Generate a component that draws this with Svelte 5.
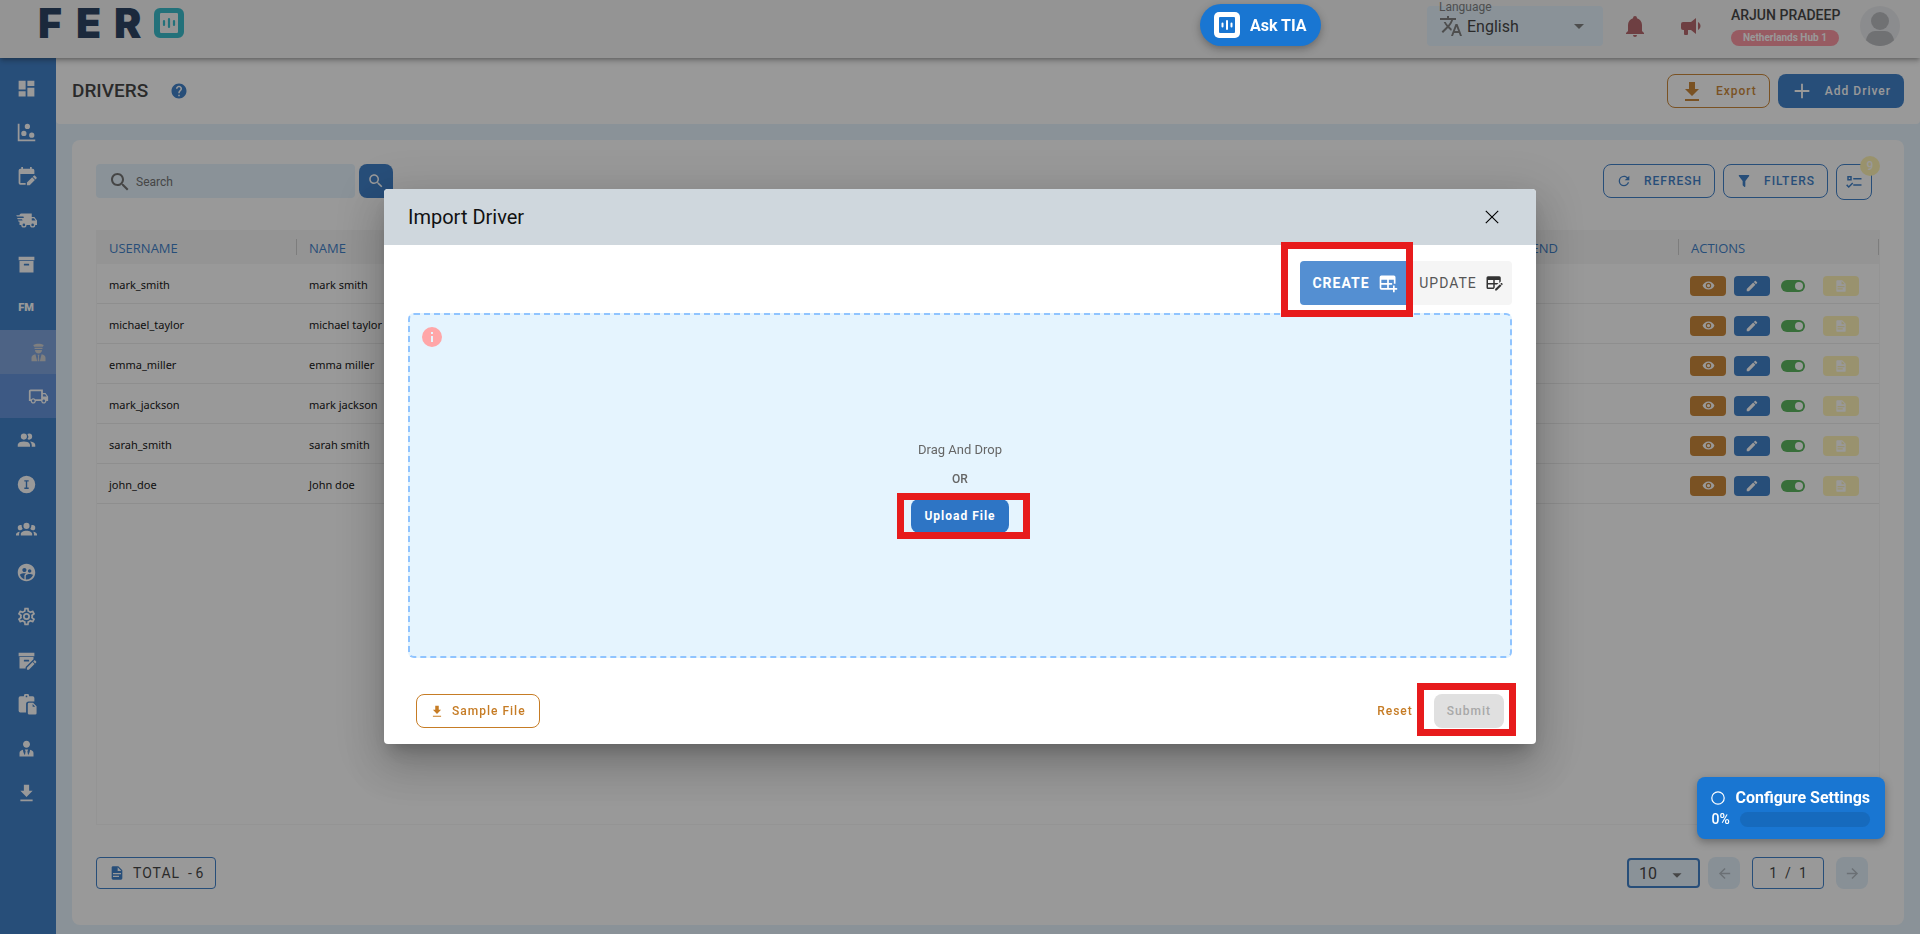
<script>
  const icons = {
    dashboard: 'M13,3V9H21V3M13,21H21V11H13M3,21H11V15H3M3,13H11V3H3V13Z',
    scatter: 'M2,2H4V20H22V22H2V2M9,10A3,3 0 0,1 12,13A3,3 0 0,1 9,16A3,3 0 0,1 6,13A3,3 0 0,1 9,10M13,2A3,3 0 0,1 16,5A3,3 0 0,1 13,8A3,3 0 0,1 10,5A3,3 0 0,1 13,2M18,12A3,3 0 0,1 21,15A3,3 0 0,1 18,18A3,3 0 0,1 15,15A3,3 0 0,1 18,12Z',
    calendarEdit: 'M5,21.5A2,2 0 0,1 3,19.5V5A2,2 0 0,1 5,3H6V1H8V3H16V1H18V3H19A2,2 0 0,1 21,5V9H5V19.5H11V21.5H5M12.5,22V18.9L18.5,12.9L21.6,16L15.6,22H12.5M22.3,15.3L19.2,12.2L20.3,11.1C20.7,10.7 21.3,10.7 21.7,11.1L23.4,12.8C23.8,13.2 23.8,13.8 23.4,14.2L22.3,15.3Z',
    truckFast: 'M3,13.5L2.25,12H7.5L6.9,10.5H2L1.25,9H9.05L8.45,7.5H1.11L0.25,6H4A2,2 0 0,1 6,4H18V8H21L24,12V17H22A3,3 0 0,1 19,20A3,3 0 0,1 16,17H12A3,3 0 0,1 9,20A3,3 0 0,1 6,17H4V13.5H3M19,18.5A1.5,1.5 0 0,0 20.5,17A1.5,1.5 0 0,0 19,15.5A1.5,1.5 0 0,0 17.5,17A1.5,1.5 0 0,0 19,18.5M20.5,9.5H18V12H22.46L20.5,9.5M9,18.5A1.5,1.5 0 0,0 10.5,17A1.5,1.5 0 0,0 9,15.5A1.5,1.5 0 0,0 7.5,17A1.5,1.5 0 0,0 9,18.5Z',
    archive: 'M3,3H21V7H3V3M4,8H20V21H4V8M9.5,11A0.5,0.5 0 0,0 9,11.5V13H15V11.5A0.5,0.5 0 0,0 14.5,11H9.5Z',
    pilot: 'M6,3.5C8,2.3 10,2 12,2C14,2 16,2.3 18,3.5L17,5.5H7L6,3.5M7.5,6.5H16.5V8H7.5V6.5M8,9H16C16,11.5 14.2,13 12,13C9.8,13 8,11.5 8,9M8.5,14L10.5,22H4V18C4,16 5.8,14.7 8.5,14M15.5,14C18.2,14.7 20,16 20,18V22H13.5L15.5,14M11,14.5H13L12.5,16.5L13,22H11L11.5,16.5Z',
    truck: 'M18 18.5C18.83 18.5 19.5 17.83 19.5 17C19.5 16.17 18.83 15.5 18 15.5C17.17 15.5 16.5 16.17 16.5 17C16.5 17.83 17.17 18.5 18 18.5M19.5 9.5H17V12H21.46L19.5 9.5M6 18.5C6.83 18.5 7.5 17.83 7.5 17C7.5 16.17 6.83 15.5 6 15.5C5.17 15.5 4.5 16.17 4.5 17C4.5 17.83 5.17 18.5 6 18.5M20 8L23 12V17H21C21 18.66 19.66 20 18 20C16.34 20 15 18.66 15 17H9C9 18.66 7.66 20 6 20C4.34 20 3 18.66 3 17H1V6C1 4.89 1.89 4 3 4H17V8H20M3 6V15H3.76C4.31 14.39 5.11 14 6 14C6.89 14 7.69 14.39 8.24 15H15V6H3Z',
    people: 'M16 17V19H2V17S2 13 9 13 16 17 16 17M12.5 7.5A3.5 3.5 0 1 0 9 11A3.5 3.5 0 0 0 12.5 7.5M15.94 13A5.32 5.32 0 0 1 18 17V19H22V17S22 13.37 15.94 13M15 4A3.39 3.39 0 0 0 13.07 4.59A5 5 0 0 1 13.07 10.41A3.39 3.39 0 0 0 15 11A3.5 3.5 0 0 0 15 4Z',
    coin: 'M12,2A10,10 0 1,1 12,22A10,10 0 1,1 12,2M9.5,7V8.5H11.2V15.5H9.5V17H14.5V15.5H12.8V8.5H14.5V7H9.5Z',
    group: 'M12,5.5A3.5,3.5 0 0,1 15.5,9A3.5,3.5 0 0,1 12,12.5A3.5,3.5 0 0,1 8.5,9A3.5,3.5 0 0,1 12,5.5M5,8C5.56,8 6.08,8.15 6.53,8.42C6.38,9.85 6.8,11.27 7.66,12.38C7.16,13.34 6.16,14 5,14A3,3 0 0,1 2,11A3,3 0 0,1 5,8M19,8A3,3 0 0,1 22,11A3,3 0 0,1 19,14C17.84,14 16.84,13.34 16.34,12.38C17.2,11.27 17.62,9.85 17.47,8.42C17.92,8.15 18.44,8 19,8M5.5,18.25C5.5,16.18 8.41,14.5 12,14.5C15.59,14.5 18.5,16.18 18.5,18.25V20H5.5V18.25M0,20V18.5C0,17.11 1.89,15.94 4.45,15.6C3.86,16.28 3.5,17.22 3.5,18.25V20H0M24,20H20.5V18.25C20.5,17.22 20.14,16.28 19.55,15.6C22.11,15.94 24,17.11 24,18.5V20Z',
    supervised: 'M11.99 2c-5.52 0-10 4.48-10 10s4.48 10 10 10 10-4.48 10-10-4.48-10-10-10zm3.61 6.34c1.07 0 1.93.86 1.93 1.93 0 1.07-.86 1.93-1.93 1.93-1.07 0-1.93-.86-1.93-1.93-.01-1.07.86-1.93 1.93-1.93zm-6-1.58c1.3 0 2.36 1.06 2.36 2.36 0 1.3-1.06 2.36-2.36 2.36s-2.36-1.06-2.36-2.36c0-1.31 1.05-2.36 2.36-2.36zm0 9.13v3.75c-2.4-.75-4.3-2.6-5.14-4.96 1.05-1.12 3.67-1.69 5.14-1.69.53 0 1.2.08 1.9.22-1.64.87-1.9 2.02-1.9 2.68zM11.99 20c-.27 0-.53-.01-.79-.04v-4.07c0-1.42 2.94-2.13 4.4-2.13 1.07 0 2.92.39 3.84 1.15-1.17 2.97-4.06 5.09-7.45 5.09z',
    cog: 'M12,8A4,4 0 0,1 16,12A4,4 0 0,1 12,16A4,4 0 0,1 8,12A4,4 0 0,1 12,8M12,10A2,2 0 0,0 10,12A2,2 0 0,0 12,14A2,2 0 0,0 14,12A2,2 0 0,0 12,10M10,22C9.75,22 9.54,21.82 9.5,21.58L9.13,18.93C8.5,18.68 7.96,18.34 7.44,17.94L4.95,18.95C4.73,19.03 4.46,18.95 4.34,18.73L2.34,15.27C2.21,15.05 2.27,14.78 2.46,14.63L4.57,12.97L4.5,12L4.57,11L2.46,9.37C2.27,9.22 2.21,8.95 2.34,8.73L4.34,5.27C4.46,5.05 4.73,4.96 4.95,5.05L7.44,6.05C7.96,5.66 8.5,5.32 9.13,5.07L9.5,2.42C9.54,2.18 9.75,2 10,2H14C14.25,2 14.46,2.18 14.5,2.42L14.87,5.07C15.5,5.32 16.04,5.66 16.56,6.05L19.05,5.05C19.27,4.96 19.54,5.05 19.66,5.27L21.66,8.73C21.79,8.95 21.73,9.22 21.54,9.37L19.43,11L19.5,12L19.43,13L21.54,14.63C21.73,14.78 21.79,15.05 21.66,15.27L19.66,18.73C19.54,18.95 19.27,19.04 19.05,18.95L16.56,17.95C16.04,18.34 15.5,18.68 14.87,18.93L14.5,21.58C14.46,21.82 14.25,22 14,22H10M11.25,4L10.88,6.61C9.68,6.86 8.62,7.5 7.85,8.39L5.44,7.35L4.69,8.65L6.8,10.2C6.4,11.37 6.4,12.64 6.8,13.8L4.68,15.36L5.43,16.66L7.86,15.62C8.63,16.5 9.68,17.14 10.87,17.38L11.24,20H12.76L13.13,17.39C14.32,17.14 15.37,16.5 16.14,15.62L18.57,16.66L19.32,15.36L17.2,13.81C17.6,12.64 17.6,11.37 17.2,10.2L19.31,8.65L18.56,7.35L16.15,8.39C15.38,7.5 14.32,6.86 13.12,6.62L12.75,4H11.25Z',
    archiveEdit: 'M3,3H21V7H3V3M4,8H20V10.5L11,19.5V21H4V8M9.5,11A0.5,0.5 0 0,0 9,11.5V13H15V11.5A0.5,0.5 0 0,0 14.5,11H9.5M12.5,22.5V20.3L19,13.8L21.2,16L14.7,22.5H12.5M21.9,15.3L19.7,13.1L20.8,12C21.1,11.7 21.6,11.7 21.9,12L23,13.1C23.3,13.4 23.3,13.9 23,14.2L21.9,15.3Z',
    clipboardFile: 'M5,2.5H9A3,3 0 0,1 15,2.5H19A2,2 0 0,1 21,4.5V8.5H14.5A3,3 0 0,0 11.5,11.5V21H5A2,2 0 0,1 3,19V4.5A2,2 0 0,1 5,2.5M12,1.8A1,1 0 1,0 12,3.8A1,1 0 1,0 12,1.8M15,10H19.5L23.5,14V22A1.5,1.5 0 0,1 22,23.5H15A1.5,1.5 0 0,1 13.5,22V11.5A1.5,1.5 0 0,1 15,10M19,11.5V14.5H22L19,11.5Z',
    tie: 'M12 3C14.21 3 16 4.79 16 7S14.21 11 12 11 8 9.21 8 7 9.79 3 12 3M16 13.54C16 14.6 15.72 17.07 13.81 19.83L13 15L13.94 13.12C13.32 13.05 12.67 13 12 13S10.68 13.05 10.06 13.12L11 15L10.19 19.83C8.28 17.07 8 14.6 8 13.54C5.61 14.24 4 15.5 4 17V21H20V17C20 15.5 18.4 14.24 16 13.54Z',
    download: 'M5,22H19V20H5M19,10H15V3H9V10H5L12,17L19,10Z',
    search: 'M15.5 14h-.79l-.28-.27C15.41 12.59 16 11.11 16 9.5 16 5.91 13.09 3 9.5 3S3 5.91 3 9.5 5.91 16 9.5 16c1.61 0 3.09-.59 4.23-1.57l.27.28v.79l5 4.99L20.49 19l-4.99-5zm-6 0C7.01 14 5 11.99 5 9.5S7.01 5 9.5 5 14 7.01 14 9.5 11.99 14 9.5 14z',
    help: 'M12 2C6.48 2 2 6.48 2 12s4.48 10 10 10 10-4.48 10-10S17.52 2 12 2zm1 17h-2v-2h2v2zm2.07-7.75l-.9.92C13.45 12.9 13 13.5 13 15h-2v-.5c0-1.1.45-2.1 1.17-2.83l1.24-1.26c.37-.36.59-.86.59-1.41 0-1.1-.9-2-2-2s-2 .9-2 2H8c0-2.21 1.79-4 4-4s4 1.79 4 4c0 .88-.36 1.68-.93 2.25z',
    info: 'M13,9H11V7H13M13,17H11V11H13M12,2A10,10 0 0,0 2,12A10,10 0 0,0 12,22A10,10 0 0,0 22,12A10,10 0 0,0 12,2Z',
    bell: 'M21,19V20H3V19L5,17V11C5,7.9 7.03,5.17 10,4.29C10,4.19 10,4.1 10,4A2,2 0 0,1 12,2A2,2 0 0,1 14,4C14,4.1 14,4.19 14,4.29C16.97,5.17 19,7.9 19,11V17L21,19M14,21A2,2 0 0,1 12,23A2,2 0 0,1 10,21',
    bullhorn: 'M12,8H4A2,2 0 0,0 2,10V14A2,2 0 0,0 4,16H5V20A1,1 0 0,0 6,21H8A1,1 0 0,0 9,20V16H12L17,20V4L12,8M21.5,12C21.5,13.71 20.54,15.26 19,16V8C20.53,8.75 21.5,10.3 21.5,12Z',
    translate: 'M12.87,15.07L10.33,12.56L10.36,12.53C12.1,10.59 13.34,8.36 14.07,6H17V4H10V2H8V4H1V6H12.17C11.5,7.92 10.44,9.75 9,11.35C8.07,10.32 7.3,9.19 6.69,8H4.69C5.42,9.63 6.42,11.17 7.67,12.56L2.58,17.58L4,19L9,14L12.11,17.11L12.87,15.07M18.5,10H16.5L12,22H14L15.12,19H19.87L21,22H23L18.5,10M15.88,17L17.5,12.67L19.12,17H15.88Z',
    caret: 'M7,10L12,15L17,10H7Z',
    plus: 'M20,13H13V20H11V13H4V11H11V4H13V11H20V13Z',
    refresh: 'M17.65,6.35C16.2,4.9 14.21,4 12,4A8,8 0 0,0 4,12A8,8 0 0,0 12,20C15.73,20 18.84,17.45 19.73,14H17.65C16.83,16.33 14.61,18 12,18A6,6 0 0,1 6,12A6,6 0 0,1 12,6C13.66,6 15.14,6.69 16.22,7.78L13,11H20V4L17.65,6.35Z',
    filter: 'M14,12V19.88C14.04,20.18 13.94,20.5 13.71,20.71C13.32,21.1 12.69,21.1 12.3,20.71L10.29,18.7C10.06,18.47 9.96,18.16 10,17.87V12H9.97L4.21,4.62C3.87,4.19 3.95,3.56 4.38,3.22C4.57,3.08 4.78,3 5,3H19C19.22,3 19.43,3.08 19.62,3.22C20.05,3.56 20.13,4.19 19.79,4.62L14.03,12H14Z',
    checklist: 'M3,4H9V10H3V4M5,6V8H7V6H5M11,6.5H22V8.5H11V6.5M11,15H22V17H11V15M5,20L1.5,16.5L2.91,15.09L5,17.17L9.59,12.59L11,14L5,20Z',
    eye: 'M12,9A3,3 0 0,0 9,12A3,3 0 0,0 12,15A3,3 0 0,0 15,12A3,3 0 0,0 12,9M12,17A5,5 0 0,1 7,12A5,5 0 0,1 12,7A5,5 0 0,1 17,12A5,5 0 0,1 12,17M12,4.5C7,4.5 2.73,7.61 1,12C2.73,16.39 7,19.5 12,19.5C17,19.5 21.27,16.39 23,12C21.27,7.61 17,4.5 12,4.5Z',
    pencil: 'M20.71,7.04C21.1,6.65 21.1,6 20.71,5.63L18.37,3.29C18,2.9 17.35,2.9 16.96,3.29L15.12,5.12L18.87,8.87M3,17.25V21H6.75L17.81,9.93L14.06,6.18L3,17.25Z',
    file: 'M13,9H18.5L13,3.5V9M6,2H14L20,8V20A2,2 0 0,1 18,22H6C4.89,22 4,21.1 4,20V4C4,2.89 4.89,2 6,2M15,18V16H6V18H15M18,14V12H6V14H18Z',
    close: 'M18.6,6.2L17.8,5.4L12,11.2L6.2,5.4L5.400,6.200L11.2,12L5.4,17.8L6.2,18.6L12,12.8L17.8,18.6L18.6,17.8L12.8,12Z',
    tablePlus: 'M4,3H19A2,2 0 0,1 21,5V13H19V8H13V12H17V14H13V18H15V20H4A2,2 0 0,1 2,18V5A2,2 0 0,1 4,3M4,8V12H11V8H4M4,14V18H11V14H4M18,15H20V18H23V20H20V23H18V20H15V18H18V15Z',
    tableEdit: 'M4,3H19A2,2 0 0,1 21,5V10L19,12V8H13V12H18L16,14H13V18L11.5,20H4A2,2 0 0,1 2,18V5A2,2 0 0,1 4,3M4,8V12H11V8H4M4,14V18H11V14H4M13.5,22V20L20,13.5L22,15.5L15.5,22H13.5M22.6,14.9L20.6,12.9L21.4,12.1C21.7,11.8 22.1,11.8 22.4,12.1L23.4,13.1C23.7,13.4 23.7,13.8 23.4,14.1L22.6,14.9Z',
    left: 'M20,11V13H8L13.5,18.5L12.08,19.92L4.16,12L12.08,4.08L13.5,5.5L8,11H20Z',
    right: 'M4,11V13H16L10.5,18.5L11.92,19.92L19.84,12L11.92,4.08L10.5,5.5L16,11H4Z'
  };

  const nav = [
    { icon: 'dashboard', label: 'Dashboard' },
    { icon: 'scatter', label: 'Analytics' },
    { icon: 'calendarEdit', label: 'Planning' },
    { icon: 'truckFast', label: 'Deliveries' },
    { icon: 'archive', label: 'Orders' },
    { text: 'FM', label: 'Fleet' },
    { icon: 'pilot', label: 'Drivers', sub: true, active: true },
    { icon: 'truck', label: 'Vehicles', sub: true },
    { icon: 'people', label: 'Customers' },
    { icon: 'coin', label: 'Invoices' },
    { icon: 'group', label: 'Teams' },
    { icon: 'supervised', label: 'Users' },
    { icon: 'cog', label: 'Settings' },
    { icon: 'archiveEdit', label: 'Order edits' },
    { icon: 'clipboardFile', label: 'Reports' },
    { icon: 'tie', label: 'Managers' },
    { icon: 'download', label: 'Downloads' }
  ];

  const drivers = [
    ['mark_smith', 'mark smith'],
    ['michael_taylor', 'michael taylor'],
    ['emma_miller', 'emma miller'],
    ['mark_jackson', 'mark jackson'],
    ['sarah_smith', 'sarah smith'],
    ['john_doe', 'John doe']
  ];
</script>

{#snippet icon(name, size)}
  <svg viewBox="0 0 24 24" width={size} height={size} aria-hidden="true"><path d={icons[name]} fill="currentColor" fill-rule="evenodd" /></svg>
{/snippet}

<div class="app">
  <header class="topbar">
    <div class="logo">
      <span>F</span><span>E</span><span>R</span>
      <svg width="30" height="30" viewBox="0 0 30 30" aria-hidden="true">
        <path fill-rule="evenodd" fill="#26b5c6" d="M6,0H24A6,6 0 0 1 30,6V24A6,6 0 0 1 24,30H6A6,6 0 0 1 0,24V6A6,6 0 0 1 6,0M7,5A1.5,1.5 0 0 0 6,6V24A1.5,1.5 0 0 0 7,25H23A1.5,1.5 0 0 0 24,24V6A1.5,1.5 0 0 0 23,5Z" />
        <path stroke="#26b5c6" stroke-width="2.2" stroke-linecap="round" d="M10,13V17M15,11V19M20,13V17" />
      </svg>
    </div>
    <div class="tools">
      <div class="language">
        <label for="lang">Language</label>
        {@render icon('translate', 24)}
        <select id="lang"><option>English</option></select>
        {@render icon('caret', 24)}
      </div>
      <button class="bare bell" aria-label="Notifications">{@render icon('bell', 24)}</button>
      <button class="bare horn" aria-label="Announcements">{@render icon('bullhorn', 24)}</button>
      <div class="user">
        <strong>ARJUN PRADEEP</strong>
        <span class="hub">Netherlands Hub 1</span>
      </div>
      <svg class="avatar" width="40" height="40" viewBox="0 0 40 40" aria-hidden="true">
        <circle cx="20" cy="20" r="20" fill="#e6e7ea" />
        <circle cx="20" cy="15" r="9" fill="#b4b6ba" />
        <path d="M6,34.3C7,28 11.5,25 15,25H25C28.5,25 33,28 34,34.3A20,20 0 0 1 6,34.3Z" fill="#b4b6ba" />
      </svg>
    </div>
  </header>

  <div class="body">
    <nav class="side">
      {#each nav as n}
        <a href="#{n.label}" aria-label={n.label} class:sub={n.sub} class:active={n.active}>
          {#if n.icon}{@render icon(n.icon, 21)}{:else}<b>{n.text}</b>{/if}
        </a>
      {/each}
    </nav>

    <main>
      <div class="titlebar">
        <h1>DRIVERS</h1>
        <span class="help">{@render icon('help', 18)}</span>
        <button class="btn outline orange">{@render icon('download', 24)}Export</button>
        <button class="btn solid">{@render icon('plus', 22)}Add Driver</button>
      </div>

      <section class="card">
        <div class="toolbar">
          <label class="search">{@render icon('search', 24)}<input type="text" placeholder="Search" aria-label="Search" /></label>
          <button class="btn solid square" aria-label="Run search">{@render icon('search', 18)}</button>
          <div class="right">
            <button class="btn outline">{@render icon('refresh', 16)}REFRESH</button>
            <button class="btn outline">{@render icon('filter', 16)}FILTERS</button>
            <button class="btn outline columns" aria-label="Columns">{@render icon('checklist', 18)}<span class="badge">9</span></button>
          </div>
        </div>

        <div class="tablebox">
          <table>
            <colgroup><col class="c200" /><col /><col class="c200" /><col class="c200" /></colgroup>
            <thead>
              <tr><th><span>USERNAME</span></th><th><span>NAME</span></th><th><span>LEAVE END</span></th><th><span>ACTIONS</span></th></tr>
            </thead>
            <tbody>
              {#each drivers as d}
                <tr>
                  <td>{d[0]}</td>
                  <td>{d[1]}</td>
                  <td></td>
                  <td>
                    <div class="actions">
                      <button class="act view" aria-label="View {d[1]}">{@render icon('eye', 13)}</button>
                      <button class="act edit" aria-label="Edit {d[1]}">{@render icon('pencil', 14)}</button>
                      <label class="switch"><input type="checkbox" checked aria-label="{d[1]} enabled" /><i></i></label>
                      <button class="act doc" aria-label="Documents of {d[1]}">{@render icon('file', 14)}</button>
                    </div>
                  </td>
                </tr>
              {/each}
            </tbody>
          </table>
        </div>

        <div class="footer">
          <div class="total">{@render icon('file', 16)}<span>TOTAL</span><span class="count">- 6</span></div>
          <div class="pager">
            <div class="size">
              <select aria-label="Rows per page"><option>10</option></select>
              {@render icon('caret', 22)}
            </div>
            <button class="step" aria-label="Previous page">{@render icon('left', 17)}</button>
            <div class="pages"><span>1</span><span>/</span><span>1</span></div>
            <button class="step" aria-label="Next page">{@render icon('right', 17)}</button>
          </div>
        </div>
      </section>
    </main>
  </div>

  <div class="overlay">
    <div class="dialog" role="dialog" aria-labelledby="dlg-title">
      <div class="dhead">
        <h2 id="dlg-title">Import Driver</h2>
        <button class="bare" aria-label="Close">{@render icon('close', 24)}</button>
      </div>
      <div class="dbody">
        <div class="modes">
          <div class="marked mark-create">
            <button class="mode on">CREATE{@render icon('tablePlus', 20)}</button>
          </div>
          <button class="mode">UPDATE{@render icon('tableEdit', 18)}</button>
        </div>
        <div class="drop">
          <span class="hint">{@render icon('info', 24)}</span>
          <div class="dropcontent">
            <p>Drag And Drop</p>
            <p class="or">OR</p>
            <div class="marked mark-upload"><button class="btn solid upload">Upload File</button></div>
          </div>
        </div>
        <div class="dfoot">
          <button class="btn outline orange sample">{@render icon('download', 14)}Sample File</button>
          <button class="btn text">Reset</button>
          <div class="marked mark-submit"><button class="btn" disabled>Submit</button></div>
        </div>
      </div>
    </div>
  </div>

  <button class="ask">
    <svg width="26" height="26" viewBox="0 0 26 26" aria-hidden="true">
      <rect width="26" height="26" rx="5" fill="#fff" />
      <rect x="5" y="5" width="16" height="16" rx="1" fill="#1976d2" />
      <path stroke="#fff" stroke-width="2" stroke-linecap="round" d="M8.5,11.5V14.5M13,9V17M17.5,11.5V14.5" />
    </svg>
    Ask TIA
  </button>

  <aside class="setup">
    <div class="setuphead">
      <svg width="14" height="14" viewBox="0 0 14 14" aria-hidden="true"><circle cx="7" cy="7" r="6.2" fill="none" stroke="#fff" stroke-width="1.2" /></svg>
      <strong>Configure Settings</strong>
    </div>
    <div class="setupbar"><span>0%</span><i></i></div>
  </aside>
</div>

<style>
  :global(body) { margin: 0; }
  .app, .app * { box-sizing: border-box; }
  .app {
    --blue: #2e75c5;
    --orange: #c67c25;
    min-height: 100vh;
    display: flex;
    flex-direction: column;
    background: #e3f2fd;
    font-family: Roboto, sans-serif;
    color: #333;
  }
  svg { display: block; flex: none; }
  button, input, select { font-family: inherit; }
  button { border: 0; margin: 0; padding: 0; background: none; }
  h1, h2, p { margin: 0; }

  .topbar {
    position: relative;
    z-index: 1;
    height: 58px;
    display: flex;
    justify-content: space-between;
    padding: 6px 20px 0 38px;
    background: #f6f6f6;
    box-shadow: 0 2px 4px -1px rgba(0, 0, 0, 0.3), 0 4px 5px rgba(0, 0, 0, 0.16);
  }
  .logo {
    display: flex;
    gap: 8px;
    height: 34px;
    align-items: center;
    font: 900 41px/34px Inter, sans-serif;
    color: #173153;
  }
  .logo span { width: 30px; }
  .logo svg { margin-left: 2px; }
  .tools { display: flex; height: 40px; }
  .language {
    position: relative;
    width: 176px;
    display: flex;
    align-items: center;
    gap: 4px;
    padding: 0 12px;
    border-radius: 4px;
    background: #e3f2fd;
    color: #757575;
  }
  .language label { position: absolute; left: 12px; top: -6px; font-size: 12px; line-height: 14px; }
  .language select {
    flex: 1;
    appearance: none;
    border: 0;
    background: none;
    padding: 0;
    font-size: 16px;
    color: #333;
  }
  .bare { display: grid; place-items: center; }
  .bell, .horn { color: #b05a5e; }
  .bell { width: 64px; }
  .horn { width: 48px; margin-right: 16px; }
  .user { width: 129px; display: flex; flex-direction: column; align-items: flex-start; gap: 8px; }
  .user strong { font-size: 14px; font-weight: 500; line-height: 18px; height: 16px; white-space: nowrap; }
  .hub {
    padding: 0 12px;
    border-radius: 8px;
    background: #fc8c9a;
    color: #fff;
    font-size: 10px;
    font-weight: 700;
    line-height: 16px;
    white-space: nowrap;
  }

  .body { flex: 1; display: flex; }
  .side { width: 56px; padding-top: 8px; background: var(--blue); }
  .side a {
    height: 44px;
    display: flex;
    align-items: center;
    justify-content: center;
    padding-right: 4px;
    color: #fff;
    text-decoration: none;
  }
  .side a.sub { padding: 0 0 0 20px; background: #558ad8; }
  .side a.active { background: #739bdb; color: #cfcfcf; }
  .side b { font-size: 11px; font-weight: 900; line-height: 16px; }

  main { flex: 1; display: flex; flex-direction: column; min-width: 0; }
  .titlebar {
    height: 66px;
    display: flex;
    align-items: center;
    gap: 8px;
    padding: 0 16px;
    border-radius: 0 0 4px 4px;
    background: #fff;
  }
  h1 { font-size: 19px; font-weight: 500; line-height: 24px; }
  .help { margin: 0 auto 0 14px; color: var(--blue); }

  .btn {
    height: 34px;
    display: inline-flex;
    align-items: center;
    justify-content: center;
    border-radius: 8px;
    padding: 0 13px;
    font-size: 12px;
    font-weight: 500;
    letter-spacing: 1px;
    white-space: nowrap;
  }
  .solid { background: var(--blue); color: #fff; }
  .outline { border: 1px solid var(--blue); color: var(--blue); padding: 0 12px; }
  .orange { border-color: var(--orange); color: var(--orange); }
  .titlebar .btn { gap: 12px; }
  .upload { font-weight: 700; }

  .card {
    flex: 1;
    display: flex;
    flex-direction: column;
    margin: 16px 16px 9px;
    padding: 24px;
    border-radius: 8px;
    background: #fff;
  }
  .toolbar { display: flex; align-items: flex-start; gap: 4px; height: 66px; }
  .search {
    width: 259px;
    height: 34px;
    display: flex;
    align-items: center;
    gap: 4px;
    padding: 2px 0 0 12px;
    border-radius: 4px;
    background: #e3f2fd;
    color: #666;
  }
  .search input { flex: 1; min-width: 0; border: 0; padding: 0; background: none; font-size: 12px; outline: 0; }
  .search input::placeholder { color: #666; }
  .square { width: 34px; padding: 0; }
  .right { margin-left: auto; display: flex; gap: 8px; padding-right: 8px; }
  .right .btn { gap: 12px; }
  .right .columns { position: relative; width: 36px; height: 36px; padding: 0; }
  .badge {
    position: absolute;
    right: -9px;
    top: -9px;
    width: 20px;
    height: 20px;
    border-radius: 50%;
    background: #fff3ac;
    color: #fff;
    font-size: 12px;
    line-height: 20px;
    letter-spacing: 0;
  }

  .tablebox { flex: 1; border: 1px solid #f5f5f5; border-top: 0; }
  table {
    width: 100%;
    table-layout: fixed;
    border-collapse: separate;
    border-spacing: 0;
    font-family: "Noto Sans", "Open Sans", sans-serif;
    font-size: 11px;
    color: #000;
  }
  .c200 { width: 200px; }
  th { height: 34px; padding: 0; background: #f6f6f6; text-align: left; font-weight: 400; font-size: 13px; color: var(--blue); font-family: "Open Sans", sans-serif; }
  th span { display: block; height: 16px; padding-left: 12px; line-height: 19px; border-right: 1px solid #ccc; }
  td { height: 40px; padding: 2px 12px 0; border-bottom: 1px solid #eaeaea; }
  td:last-child { padding: 2px 11px 0; }
  .actions { display: flex; align-items: center; gap: 8px; padding-top: 2px; }
  .act { width: 36px; height: 20px; display: grid; place-items: center; border-radius: 4px; color: #fff; }
  .view { background: var(--orange); }
  .edit { background: var(--blue); }
  .doc { background: #fff3b0; }
  .switch { position: relative; width: 37px; padding-left: 3px; }
  .switch input { position: absolute; opacity: 0; margin: 0; width: 24px; height: 12px; }
  .switch i { display: block; width: 24px; height: 12px; border-radius: 6px; background: #4caf50; padding: 2px; }
  .switch i::after { content: ""; display: block; width: 8px; height: 8px; margin-left: auto; border-radius: 50%; background: #fff; }

  .footer { display: flex; align-items: center; justify-content: space-between; padding: 32px 12px 12px 0; }
  .total {
    height: 32px;
    display: flex;
    align-items: center;
    gap: 8px;
    padding: 0 12px;
    border: 1px solid var(--blue);
    border-radius: 4px;
    font-size: 14px;
    letter-spacing: 1px;
  }
  .total svg { color: var(--blue); }
  .total .count { letter-spacing: 0; }
  .pager { display: flex; align-items: center; gap: 12px; }
  .size {
    width: 73px;
    height: 30px;
    display: flex;
    align-items: center;
    padding: 0 10px;
    margin-right: -4px;
    border: 2px solid var(--blue);
    border-radius: 4px;
    background: #e3f2fd;
  }
  .size select { flex: 1; min-width: 0; appearance: none; border: 0; padding: 0; background: none; font-size: 16px; color: #333; }
  .size svg { color: #666; margin-top: 4px; }
  .step { width: 32px; height: 32px; display: grid; place-items: center; border-radius: 8px; background: #dfeefa; color: #aab4bc; }
  .pages {
    width: 72px;
    height: 32px;
    display: flex;
    align-items: center;
    justify-content: center;
    gap: 8px;
    border: 1px solid var(--blue);
    border-radius: 4px;
    font-size: 14px;
  }

  .overlay {
    position: fixed;
    inset: 0;
    z-index: 5;
    display: flex;
    align-items: center;
    justify-content: center;
    padding-bottom: 1px;
    background: rgba(33, 33, 33, 0.46);
  }
  .dialog {
    width: 60%;
    border-radius: 4px;
    background: #fff;
    box-shadow: 0 11px 15px -7px rgba(0, 0, 0, 0.2), 0 24px 38px 3px rgba(0, 0, 0, 0.14), 0 9px 46px 8px rgba(0, 0, 0, 0.12);
  }
  .dhead {
    height: 56px;
    display: flex;
    align-items: center;
    justify-content: space-between;
    padding: 0 32px 0 24px;
    border-radius: 4px 4px 0 0;
    background: #cfd7dd;
    color: #111;
  }
  h2 { font-size: 20px; font-weight: 400; line-height: 28px; }
  .dbody { padding: 16px 24px; }
  .modes { display: flex; justify-content: flex-end; }
  .mode {
    width: 106px;
    height: 44px;
    display: flex;
    align-items: center;
    justify-content: center;
    gap: 8px;
    padding-left: 4px;
    border-radius: 0 4px 4px 0;
    background: #f5f5f5;
    color: #555;
    font-size: 14px;
    letter-spacing: 1px;
  }
  .mode svg { color: #333; }
  .mode.on { border-radius: 4px 0 0 4px; background: #548fd2; color: #fff; font-weight: 700; }
  .mode.on svg { color: #fff; }
  .drop {
    display: grid;
    height: 345px;
    margin-top: 8px;
    padding: 10px;
    border: 2px dashed #90c4ff;
    border-radius: 6px;
    background: #e5f4fe;
  }
  .drop > * { grid-area: 1 / 1; }
  .hint { justify-self: start; color: #ffa6a8; }
  .dropcontent { align-self: center; display: flex; flex-direction: column; align-items: center; gap: 11px; padding-top: 2px; font-size: 13px; line-height: 18px; color: #666; }
  .dropcontent .or { font-size: 12px; font-weight: 500; }
  .dfoot { display: flex; align-items: center; gap: 8px; padding: 36px 8px 0; }
  .sample { gap: 8px; margin-right: auto; padding: 0 13px; }
  .text { color: var(--orange); }
  .dfoot .btn:disabled { background: #e0e0e0; color: #a8a8a8; }

  .marked { position: relative; display: flex; }
  .marked::after { content: ""; position: absolute; border: 7px solid #e71b1c; pointer-events: none; z-index: 1; }
  .mark-create::after { inset: -19px -7px -12px -19px; }
  .mark-upload::after { inset: -6px -21px -6px -14px; }
  .mark-submit::after { inset: -11px -12px -8px -17px; }

  .ask {
    position: fixed;
    left: 62.5%;
    top: 4px;
    z-index: 6;
    height: 42px;
    display: flex;
    align-items: center;
    gap: 10px;
    padding: 0 14px;
    border-radius: 21px;
    background: #1976d2;
    color: #fff;
    font-size: 16px;
    font-weight: 700;
    box-shadow: 0 3px 8px rgba(0, 0, 0, 0.3);
  }
  .setup {
    position: fixed;
    right: 35px;
    bottom: 95px;
    z-index: 6;
    padding: 10px 15px 12px 14px;
    border-radius: 8px;
    background: #1976d2;
    color: #fff;
    box-shadow: 0 3px 8px rgba(0, 0, 0, 0.3);
  }
  .setuphead { display: flex; align-items: center; gap: 10px; font-size: 16px; line-height: 22px; }
  .setupbar { display: flex; align-items: center; gap: 10px; margin-top: 3px; font-size: 14px; font-weight: 500; line-height: 15px; }
  .setupbar i { flex: 1; height: 15px; border-radius: 8px; background: #166abd; }
</style>
